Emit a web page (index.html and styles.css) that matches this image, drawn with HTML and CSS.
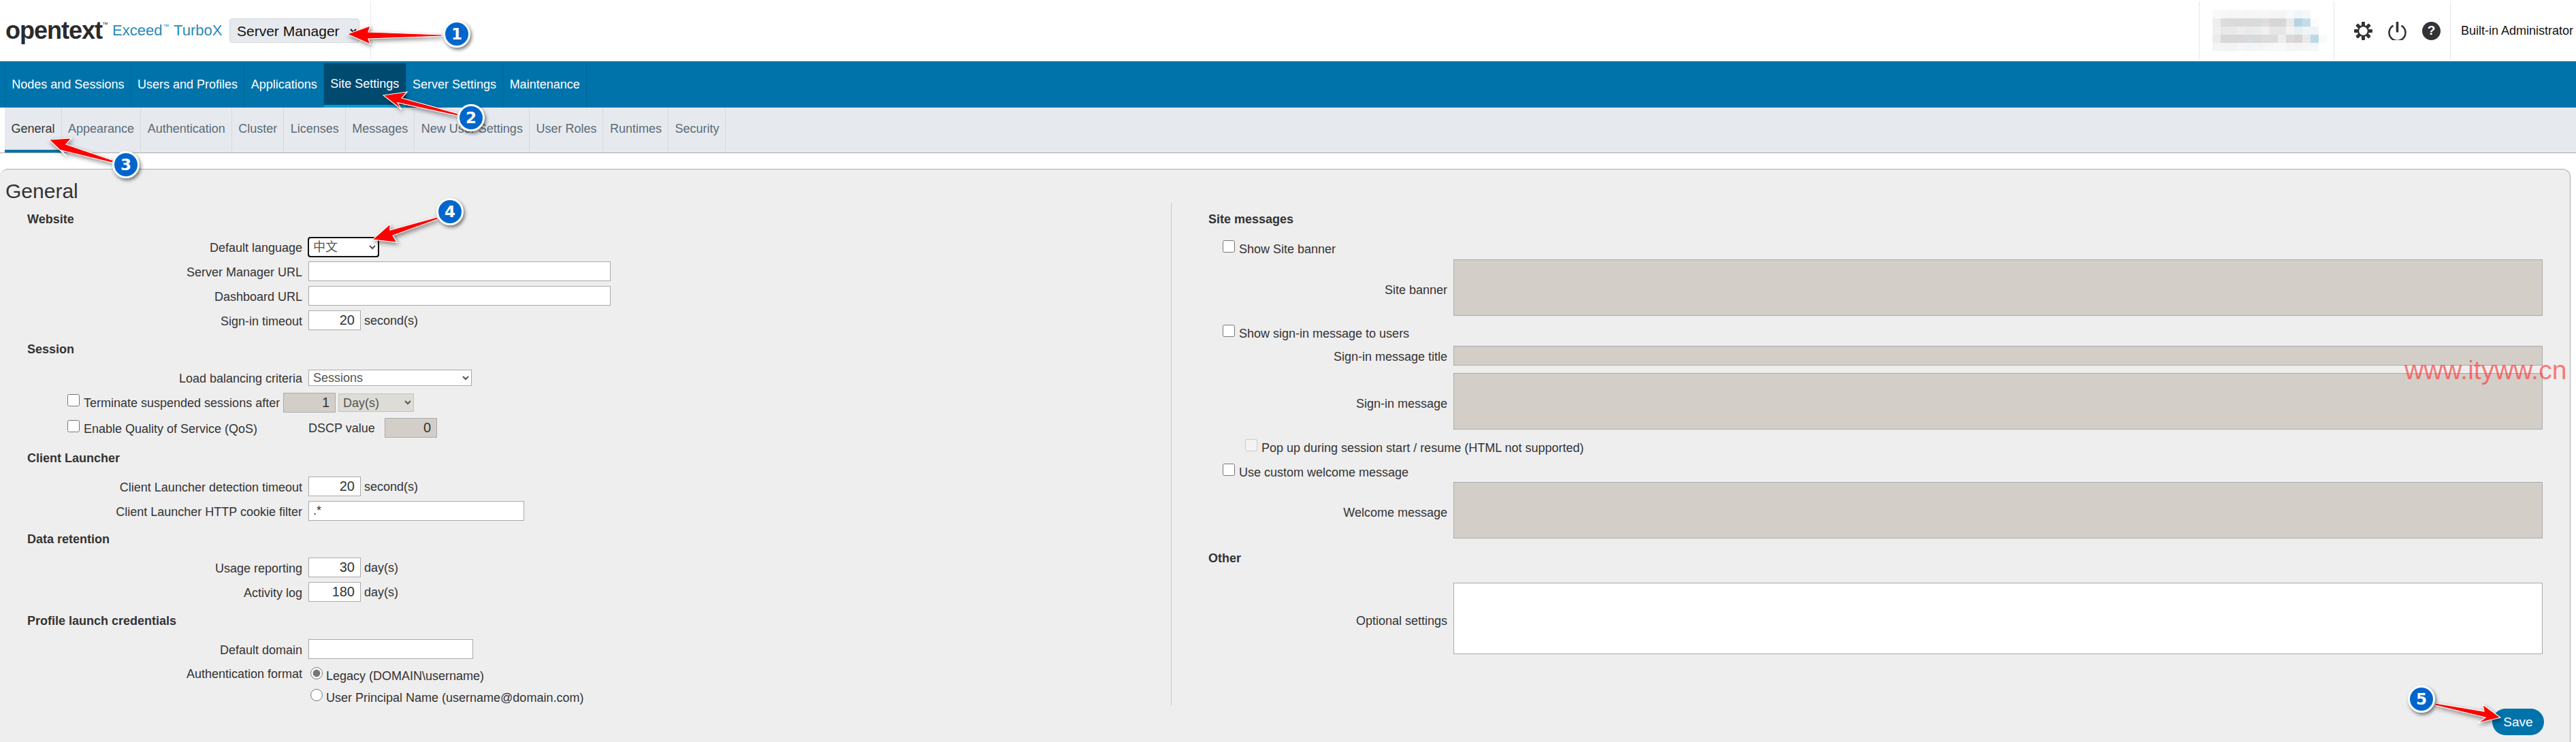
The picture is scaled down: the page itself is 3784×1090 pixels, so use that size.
FILE: index.html
```html
<!DOCTYPE html>
<html lang="en">
<head>
<meta charset="utf-8">
<title>Exceed TurboX Server Manager</title>
<link rel="stylesheet" href="styles.css">
</head>
<body>
<div class="page">
  <header class="header">
    <div class="logo"><span class="logo-main">opentext</span><span class="logo-tm">™</span><span class="logo-sub">Exceed<sup class="logo-sup">™</sup> TurboX</span></div>
    <select class="product"><option>Server Manager</option></select>
    <div class="hdr-sep"></div>
    <div class="hdr-cell hdr-blur">
      <svg class="blur" width="168" height="60" viewBox="0 0 168 60" shape-rendering="crispEdges">
        <g>
          <rect x="0" y="0" width="12" height="12" fill="#f9f9f9"/><rect x="12" y="0" width="12" height="12" fill="#f7f7f7"/><rect x="24" y="0" width="12" height="12" fill="#f6f6f6"/><rect x="36" y="0" width="12" height="12" fill="#f6f6f6"/><rect x="48" y="0" width="12" height="12" fill="#f5f5f5"/><rect x="60" y="0" width="12" height="12" fill="#f6f6f6"/><rect x="72" y="0" width="12" height="12" fill="#f7f7f7"/><rect x="84" y="0" width="12" height="12" fill="#f5f5f5"/><rect x="96" y="0" width="12" height="12" fill="#f5f5f5"/><rect x="108" y="0" width="12" height="12" fill="#f9f9f9"/><rect x="120" y="0" width="12" height="12" fill="#eff6fa"/><rect x="132" y="0" width="12" height="12" fill="#f2f8fb"/>
          <rect x="0" y="12" width="12" height="12" fill="#eeeeee"/><rect x="12" y="12" width="12" height="12" fill="#dcdcdc"/><rect x="24" y="12" width="12" height="12" fill="#dadada"/><rect x="36" y="12" width="12" height="12" fill="#dadada"/><rect x="48" y="12" width="12" height="12" fill="#d8dadc"/><rect x="60" y="12" width="12" height="12" fill="#d9dbdb"/><rect x="72" y="12" width="12" height="12" fill="#e0dcdc"/><rect x="84" y="12" width="12" height="12" fill="#d6d6d6"/><rect x="96" y="12" width="12" height="12" fill="#d6d6d6"/><rect x="108" y="12" width="12" height="12" fill="#eaeaea"/><rect x="120" y="12" width="12" height="12" fill="#b5d3e3"/><rect x="132" y="12" width="12" height="12" fill="#c5dde8"/><rect x="144" y="12" width="12" height="12" fill="#fafcfc"/>
          <rect x="0" y="24" width="12" height="12" fill="#f0f0f0"/><rect x="12" y="24" width="12" height="12" fill="#e8e8e8"/><rect x="24" y="24" width="12" height="12" fill="#e8e8e8"/><rect x="36" y="24" width="12" height="12" fill="#eeecec"/><rect x="48" y="24" width="12" height="12" fill="#e8eaec"/><rect x="60" y="24" width="12" height="12" fill="#ebecec"/><rect x="72" y="24" width="12" height="12" fill="#f1f1f1"/><rect x="84" y="24" width="12" height="12" fill="#e6e6e6"/><rect x="96" y="24" width="12" height="12" fill="#e6e6e6"/><rect x="108" y="24" width="12" height="12" fill="#f3f3f3"/><rect x="120" y="24" width="12" height="12" fill="#e6eff3"/><rect x="132" y="24" width="12" height="12" fill="#eef4f7"/><rect x="144" y="24" width="12" height="12" fill="#eef4f7"/>
          <rect x="0" y="36" width="12" height="12" fill="#ebebeb"/><rect x="12" y="36" width="12" height="12" fill="#d8d8d8"/><rect x="24" y="36" width="12" height="12" fill="#d8d8d8"/><rect x="36" y="36" width="12" height="12" fill="#d8d8d8"/><rect x="48" y="36" width="12" height="12" fill="#d6dcde"/><rect x="60" y="36" width="12" height="12" fill="#d8dada"/><rect x="72" y="36" width="12" height="12" fill="#dcdcdc"/><rect x="84" y="36" width="12" height="12" fill="#dcdcdc"/><rect x="96" y="36" width="12" height="12" fill="#ededed"/><rect x="108" y="36" width="12" height="12" fill="#dbd8d8"/><rect x="120" y="36" width="12" height="12" fill="#d6d4d4"/><rect x="132" y="36" width="12" height="12" fill="#e9e9e9"/><rect x="144" y="36" width="12" height="12" fill="#bdd8e5"/><rect x="156" y="36" width="12" height="12" fill="#f6fafb"/>
          <rect x="0" y="48" width="12" height="12" fill="#f4f4f4"/><rect x="12" y="48" width="12" height="12" fill="#f3f3f3"/><rect x="24" y="48" width="12" height="12" fill="#f2f2f2"/><rect x="36" y="48" width="12" height="12" fill="#f6f6f6"/><rect x="48" y="48" width="12" height="12" fill="#f3f4f4"/><rect x="60" y="48" width="12" height="12" fill="#f4f5f5"/><rect x="72" y="48" width="12" height="12" fill="#f6f6f6"/><rect x="84" y="48" width="12" height="12" fill="#f8f8f8"/><rect x="96" y="48" width="12" height="12" fill="#f9f9f9"/><rect x="108" y="48" width="12" height="12" fill="#f5f5f5"/><rect x="120" y="48" width="12" height="12" fill="#f5f5f5"/><rect x="132" y="48" width="12" height="12" fill="#f5f6f6"/><rect x="144" y="48" width="12" height="12" fill="#f3f7f9"/>
        </g>
      </svg>
    </div>
    <div class="hdr-cell hdr-icons">
      <svg class="icon" width="27" height="27" viewBox="0 0 27 27">
        <g fill="#333">
          <rect x="11" y="0" width="5" height="27" rx="1"/>
          <rect x="11" y="0" width="5" height="27" rx="1" transform="rotate(45 13.5 13.5)"/>
          <rect x="11" y="0" width="5" height="27" rx="1" transform="rotate(90 13.5 13.5)"/>
          <rect x="11" y="0" width="5" height="27" rx="1" transform="rotate(135 13.5 13.5)"/>
        </g>
        <circle cx="13.5" cy="13.5" r="8.5" fill="#333"/>
        <circle cx="13.5" cy="13.5" r="6.2" fill="#fff"/>
      </svg>
      <svg class="icon" width="27" height="27" viewBox="0 0 27 27">
        <path d="M7.5 5.6a12 12 0 1 0 12 0" fill="none" stroke="#333" stroke-width="2.6"/>
        <path d="M13.5 1v13" fill="none" stroke="#333" stroke-width="3.6" stroke-linecap="round"/>
      </svg>
      <span class="help">?</span>
    </div>
    <div class="hdr-cell hdr-user">Built-in Administrator</div>
  </header>

  <nav class="nav">
    <a class="nav-item">Nodes and Sessions</a>
    <a class="nav-item">Users and Profiles</a>
    <a class="nav-item">Applications</a>
    <a class="nav-item nav-active">Site Settings</a>
    <a class="nav-item">Server Settings</a>
    <a class="nav-item">Maintenance</a>
  </nav>

  <div class="subnav">
    <div class="subnav-bar">
      <a class="sub-item sub-active">General</a>
      <a class="sub-item">Appearance</a>
      <a class="sub-item">Authentication</a>
      <a class="sub-item">Cluster</a>
      <a class="sub-item">Licenses</a>
      <a class="sub-item">Messages</a>
      <a class="sub-item">New User Settings</a>
      <a class="sub-item">User Roles</a>
      <a class="sub-item">Runtimes</a>
      <a class="sub-item">Security</a>
    </div>
  </div>

  <main class="panel">
    <h1 class="panel-title">General</h1>
    <div class="columns">
      <section class="col-left">
        <h2 class="title t-website">Website</h2>
        <div class="row"><label class="lbl">Default language</label><div class="fld"><select class="sel sel-lang"><option>中文</option></select></div></div>
        <div class="row"><label class="lbl">Server Manager URL</label><div class="fld"><input class="txt w-url" type="text"></div></div>
        <div class="row"><label class="lbl">Dashboard URL</label><div class="fld"><input class="txt w-url" type="text"></div></div>
        <div class="row"><label class="lbl">Sign-in timeout</label><div class="fld"><input class="txt num" type="text" value="20"><span class="unit">second(s)</span></div></div>

        <h2 class="title t-session">Session</h2>
        <div class="row row-load"><label class="lbl">Load balancing criteria</label><div class="fld"><select class="sel sel-load"><option>Sessions</option></select></div></div>
        <div class="row row-term">
          <label class="chk"><input type="checkbox">Terminate suspended sessions after</label>
          <input class="txt num off" type="text" value="1" disabled>
          <select class="sel sel-day" disabled><option>Day(s)</option></select>
        </div>
        <div class="row">
          <label class="chk chk-qos"><input type="checkbox">Enable Quality of Service (QoS)</label>
          <div class="fld"><span class="dscp">DSCP value</span><input class="txt num off" type="text" value="0" disabled></div>
        </div>

        <h2 class="title t-client">Client Launcher</h2>
        <div class="row"><label class="lbl">Client Launcher detection timeout</label><div class="fld"><input class="txt num" type="text" value="20"><span class="unit">second(s)</span></div></div>
        <div class="row"><label class="lbl">Client Launcher HTTP cookie filter</label><div class="fld"><input class="txt w-filter" type="text" value=".*"></div></div>

        <h2 class="title t-data">Data retention</h2>
        <div class="row"><label class="lbl">Usage reporting</label><div class="fld"><input class="txt num" type="text" value="30"><span class="unit">day(s)</span></div></div>
        <div class="row"><label class="lbl">Activity log</label><div class="fld"><input class="txt num" type="text" value="180"><span class="unit">day(s)</span></div></div>

        <h2 class="title t-profile">Profile launch credentials</h2>
        <div class="row"><label class="lbl">Default domain</label><div class="fld"><input class="txt w-domain" type="text"></div></div>
        <div class="row row-auth">
          <label class="lbl">Authentication format</label>
          <div class="radios">
            <label class="rad"><input type="radio" name="auth" checked>Legacy (DOMAIN\username)</label>
            <label class="rad"><input type="radio" name="auth">User Principal Name (username@domain.com)</label>
          </div>
        </div>
      </section>

      <section class="col-right">
        <h2 class="title t-site">Site messages</h2>
        <label class="chk chk-r c-banner"><input type="checkbox">Show Site banner</label>
        <div class="rrow"><label class="lbl">Site banner</label><textarea class="area off" disabled></textarea></div>
        <label class="chk chk-r c-signin"><input type="checkbox">Show sign-in message to users</label>
        <div class="rrow r-title"><label class="lbl">Sign-in message title</label><input class="txt off w-full" type="text" disabled></div>
        <div class="rrow r-msg"><label class="lbl">Sign-in message</label><textarea class="area off" disabled></textarea></div>
        <label class="chk chk-r chk-sub c-popup"><input type="checkbox" disabled>Pop up during session start / resume (HTML not supported)</label>
        <label class="chk chk-r c-welcome"><input type="checkbox">Use custom welcome message</label>
        <div class="rrow r-welcome"><label class="lbl">Welcome message</label><textarea class="area off" disabled></textarea></div>
        <h2 class="title t-other">Other</h2>
        <div class="rrow"><label class="lbl">Optional settings</label><textarea class="area area-opt"></textarea></div>
      </section>
    </div>
    <div class="actions"><button class="save" type="button">Save</button></div>
  </main>

  <div class="watermark">www.ityww.cn</div>

  <svg class="arrows" width="3784" height="1090" viewBox="0 0 3784 1090">
    <polygon points="510,50 544,38 541,47 649,51 649,53 541,57 544,65"/>
    <polygon points="563,140 598,135 590,144 673,167 672,170 584,151 590,161"/>
    <polygon points="72,205 105,203 97,212 167,236 165,239 90,221 98,230"/>
    <polygon points="547,352 573,329 573,338 642,319 643,322 577,346 583,356"/>
    <polygon points="3673,1054 3647,1035 3649,1045 3577,1033 3577,1036 3651,1054 3640,1062"/>
  </svg>
  <div class="badge b1">1</div>
  <div class="badge b2">2</div>
  <div class="badge b3">3</div>
  <div class="badge b4">4</div>
  <div class="badge b5">5</div>
</div>
</body>
</html>
```
FILE: styles.css
```css
* { box-sizing: border-box; }
html, body { margin: 0; padding: 0; }
body {
  width: 3784px;
  height: 1090px;
  overflow: hidden;
  background: #fff;
  color: #333;
  font-family: "Liberation Sans", "Noto Sans CJK SC", sans-serif;
  font-size: 18px;
}
.page { position: relative; width: 3784px; height: 1090px; overflow: hidden; }

/* header */
.header { display: flex; align-items: center; height: 90px; padding-left: 8px; background: #fff; }
.logo { display: flex; align-items: center; width: 329px; white-space: nowrap; }
.logo-main { font-size: 36px; font-weight: 700; letter-spacing: -1px; color: #2b2b2b; line-height: 40px; }
.logo-tm { font-size: 9px; align-self: flex-start; margin: 6px 6px 0 0; color: #333; }
.logo-sub { font-size: 22px; color: #2a8ab8; }
.logo-sup { font-size: 9px; vertical-align: 10px; line-height: 0; margin: 0 1px; }
.product {
  width: 191px; height: 36px; padding: 0 6px;
  font: 21px "Liberation Sans", sans-serif; color: #111;
  background: #e6eaee; border: 1px solid #d4d8dc; border-radius: 4px;
}
.hdr-sep { width: 1px; height: 86px; margin-left: 16px; background: #e9e9e9; }
.hdr-cell { display: flex; align-items: center; height: 86px; border-left: 1px solid #e6e6e6; }
.hdr-blur { width: 198px; margin-left: auto; padding-left: 19px; }
.blur { display: block; }
.hdr-icons { width: 171px; padding-left: 29px; gap: 23px; }
.icon { display: block; flex: none; }
.help {
  display: flex; align-items: center; justify-content: center; flex: none;
  width: 27px; height: 27px; border-radius: 50%;
  background: #333; color: #fff; font-size: 19px; font-weight: 700;
}
.hdr-user { width: 185px; padding-left: 15px; color: #111; white-space: nowrap; }

/* main nav */
.nav { display: flex; align-items: flex-end; height: 68px; padding-left: 7px; background: #0073aa; }
.nav-item {
  display: flex; align-items: center; height: 65px; padding: 0 9.3px 3px;
  color: #fff; white-space: nowrap;
  border-left: 1px solid #00669a;
}
.nav-item:last-child { border-right: 1px solid #00669a; }
.nav-active { background: #004a70; border-bottom: 4px solid #009fd6; padding-bottom: 0; }

/* sub nav */
.subnav { height: 67px; padding-left: 7px; border-bottom: 1px solid #a9a9a9; background: #fff; }
.subnav-bar { display: flex; height: 66px; background: #e6eaee; }
.sub-item {
  display: flex; align-items: center; height: 66px; padding: 0 9px 4px 9.5px;
  color: #5b6b78; white-space: nowrap;
  border-right: 1px solid #d6dade;
}
.sub-active { color: #333; border-bottom: 4px solid #0073aa; padding-bottom: 0; }

/* panel */
.panel {
  height: 842px; margin: 23px 8px 0 0;
  background: #eee; border-top: 1px solid #aaa; border-right: 1px solid #aaa;
  border-radius: 12px 12px 0 0;
}
.panel-title { height: 49px; margin: 0; padding: 16px 0 0 8px; font-size: 30px; font-weight: 400; line-height: 32px; color: #333; }
.columns { display: flex; height: 738px; }
.col-left { display: flex; flex-direction: column; width: 1720px; padding-left: 40px; }
.col-right { display: flex; flex-direction: column; flex: 1; padding-left: 54px; border-left: 1px solid #b8cbd8; }

.title { height: 24px; margin: 0 0 15px; font-size: 18px; font-weight: 700; line-height: 24px; color: #333; }
.t-website { margin-top: 12px; margin-bottom: 14px; }
.t-session { margin-top: 9px; margin-bottom: 17px; }
.t-client { margin-top: 11px; }
.t-data { margin-top: 8px; }
.t-profile { margin-top: 9px; }
.t-site { margin-top: 12px; margin-bottom: 20px; }
.t-other { margin-top: 17px; margin-bottom: 24px; }

.row { display: grid; grid-template-columns: 404px 1fr; column-gap: 9px; align-items: center; height: 29px; margin-bottom: 7px; flex: none; }
.lbl { display: block; padding-top: 2px; text-align: right; line-height: 24px; color: #333; white-space: nowrap; }
.fld { display: flex; align-items: center; }
.unit { margin-left: 5px; padding-top: 2px; }
.dscp { width: 112px; padding-top: 2px; }

.row-load { height: 24px; margin-bottom: 11px; }
.row-term { display: flex; column-gap: 0; padding-left: 59px; margin-bottom: 8px; }
.row-term .chk { width: 317px; }
.row-auth { align-items: start; height: auto; margin: 3px 0 0; }
.row-auth .lbl { padding-top: 0; }

.txt {
  height: 29px; padding: 0 6px;
  background: #fff; border: 1px solid #aaa; border-radius: 0;
  font: 20px "Liberation Sans", sans-serif; color: #333;
}
.num { width: 77px; padding-right: 8px; text-align: right; }
.off { background: #d3cfc8; opacity: 1; }
.w-url { width: 444px; }
.w-filter { width: 317px; font-size: 18px; }
.w-domain { width: 242px; }
.w-full { width: 1600px; }

.sel {
  background: #fff; border: 1px solid #aaa; border-radius: 0; color: #555; padding: 0 2px;
  font: 18px "Liberation Sans", "Noto Sans CJK SC", sans-serif;
}
.sel-lang { width: 103px; height: 28px; border: 1px solid #111; border-radius: 3px; outline: 2px solid #111; outline-offset: -1px; }
.sel-load { width: 240px; height: 24px; }
.sel-day { width: 111px; height: 27px; margin-left: 4px; background: #dedcd6; border-color: #c2c2c2; color: #555; opacity: 1; }

.chk { display: flex; align-items: flex-start; gap: 6px; height: 24px; line-height: 24px; white-space: nowrap; flex: none; }
.chk input { width: 18px; height: 18px; margin: -1px 0 0; flex: none; }
.chk-qos { padding-left: 59px; margin-top: 3px; }
.chk-r { margin-left: 21px; }
.chk-sub { margin-left: 54px; }
.c-banner { margin-bottom: 3px; }
.c-signin { margin-top: 14px; }
.c-popup { margin-top: 15px; }
.c-welcome { margin-top: 12px; }

.radios { display: flex; flex-direction: column; gap: 8px; padding-top: 3px; }
.rad { display: flex; align-items: flex-start; gap: 5px; height: 24px; line-height: 24px; white-space: nowrap; }
.rad input { width: 18px; height: 18px; margin: -1px 0 0 3px; flex: none; accent-color: #777; }

.rrow { display: grid; grid-template-columns: 351px 1600px; column-gap: 9px; align-items: center; }
.rrow .lbl { padding-top: 6px; }
.rrow.r-title .lbl { padding-top: 3px; }
.r-title { margin-top: 6px; }
.r-msg { margin-top: 11px; }
.r-welcome { margin-top: 2px; }
.area {
  display: block; width: 1600px; height: 83px; resize: none; margin: 0;
  border: 1px solid #aaa; border-radius: 0; background: #d3cfc8; opacity: 1;
}
.area-opt { height: 105px; background: #fff; }

.actions { display: flex; justify-content: flex-end; padding: 5px 38px 0 0; }
.save {
  width: 76px; height: 39px; padding: 0;
  border: 0; border-radius: 20px; background: #0073aa; color: #fff;
  font: 19px "Liberation Sans", sans-serif;
}

/* overlays */
.watermark {
  position: absolute; left: 3532px; top: 521px;
  font-size: 39px; line-height: 45px; color: rgba(255, 50, 50, .65); white-space: nowrap;
}
.arrows { position: absolute; left: 0; top: 0; pointer-events: none; filter: drop-shadow(2px 3px 3px rgba(0, 0, 0, .45)); }
.arrows polygon { fill: #f00; stroke: #fff; stroke-width: 1.2; stroke-linejoin: miter; }
.badge {
  position: absolute; display: flex; align-items: center; justify-content: center;
  width: 40px; height: 40px; border: 3px solid #fff; border-radius: 50%;
  background: #0066cc; color: #fff; font: 700 23px "DejaVu Sans", sans-serif;
  box-shadow: 2px 3px 5px rgba(0, 0, 0, .5);
}
.b1 { left: 651px; top: 30px; }
.b2 { left: 672px; top: 153px; }
.b3 { left: 165px; top: 222px; }
.b4 { left: 641px; top: 291px; }
.b5 { left: 3537px; top: 1007px; }
```
